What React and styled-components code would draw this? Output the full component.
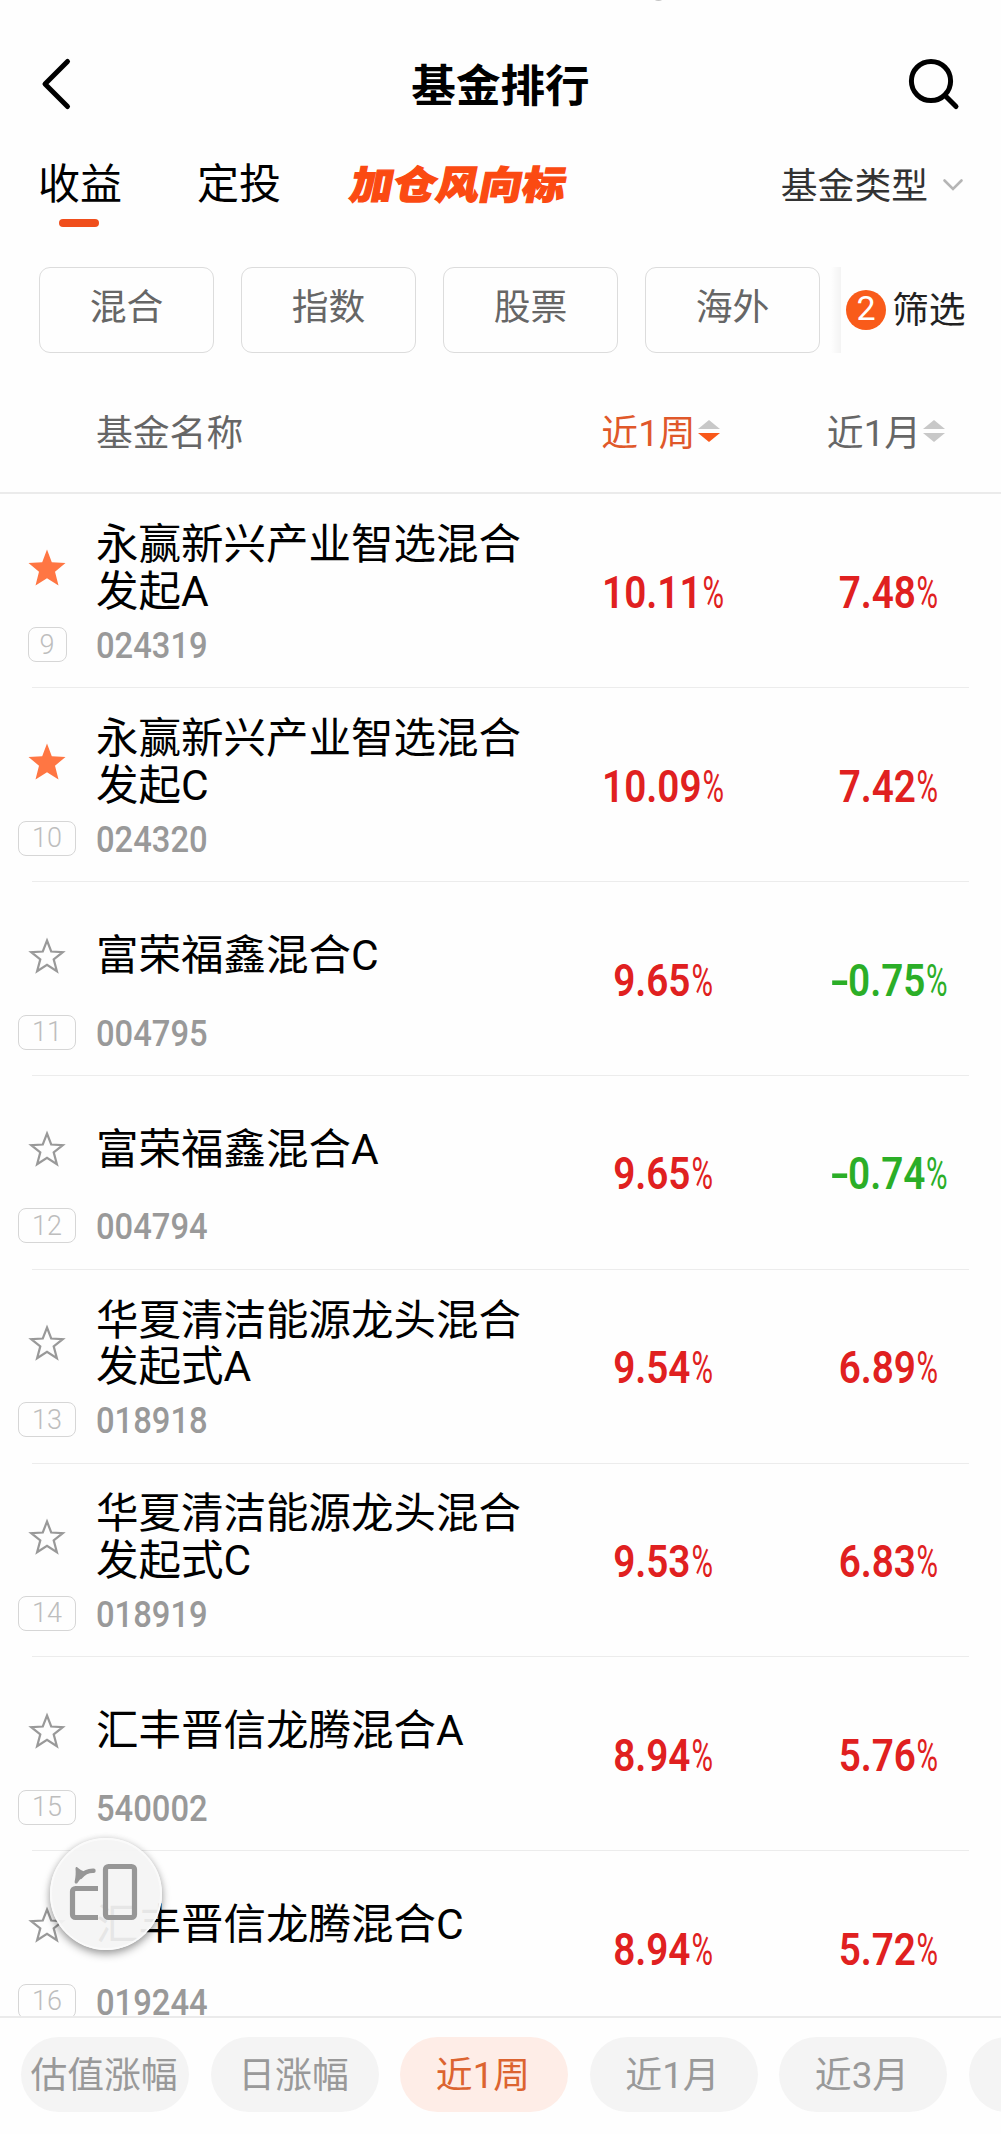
import React, { useState } from 'react';
import styled, { createGlobalStyle, css } from 'styled-components';

const GlobalStyle = createGlobalStyle`
  * { box-sizing: border-box; }
  body {
    margin: 0;
    background: #fefefe;
    font-family: Roboto, "Noto Sans CJK SC", sans-serif;
    color: #000;
  }
  button {
    border: 0;
    padding: 0;
    background: none;
    font: inherit;
    color: inherit;
  }
`;

const Page = styled.div`
  position: relative;
  display: flex;
  flex-direction: column;
  width: 1001px;
  height: 2134px;
  overflow: hidden;
  background: #fefefe;
`;

const CameraDot = styled.div`
  position: absolute;
  top: -7px;
  left: 653px;
  width: 11px;
  height: 8px;
  border-radius: 50%;
  background: #c4c4c4;
`;

/* header */
const Header = styled.header`
  display: flex;
  justify-content: space-between;
  align-items: center;
  height: 132px;
  padding: 36px 38px 0 38px;
`;

const Title = styled.h1`
  margin: 6px 0 0;
  font-size: 44.6px;
  line-height: 60px;
  font-weight: 700;
`;

const IconButton = styled.button`
  display: flex;
  width: 56px;
  height: 56px;
`;

/* tabs */
const TabBar = styled.nav`
  display: flex;
  height: 126px;
  padding: 21px 37px 0 38px;
`;

const Tab = styled.button`
  display: flex;
  flex-direction: column;
  align-items: flex-start;
  width: 159px;
  font-size: 42px;
  line-height: 64px;

  &::after {
    content: '';
    width: 40px;
    height: 8px;
    margin: 2px 0 0 21px;
    border-radius: 4px;
    background: ${({ $active }) => ($active ? '#f04e1c' : 'transparent')};
  }
`;

const PromoTab = styled.button`
  height: 64px;
  margin-left: -5px;
  font-size: 43px;
  line-height: 66px;
  font-weight: 900;
  color: #fb4a12;
  -webkit-text-stroke: 1.4px #fb4a12;
  transform: skewX(-11deg) scaleY(0.9);
`;

const TypeSelect = styled.button`
  display: flex;
  align-items: center;
  gap: 14px;
  height: 59px;
  margin-left: auto;
  font-size: 36.8px;
  color: #333;

  svg { margin-top: 4px; }
`;

/* filter chips */
const FilterBar = styled.div`
  display: flex;
  height: 114px;
  padding-top: 9px;
  padding-left: 39px;
`;

const Chip = styled.button`
  width: 175px;
  height: 86px;
  margin-right: 27px;
  padding-bottom: 12px;
  border: 1.6px solid #dcdcdc;
  border-radius: 11px;
  font-size: 36.8px;
  color: #666;
`;

const FilterEdge = styled.span`
  width: 10px;
  height: 86px;
  margin-left: -16px;
  background: linear-gradient(to right, rgba(0, 0, 0, 0), rgba(0, 0, 0, 0.045));
`;

const FilterButton = styled.button`
  display: flex;
  align-items: center;
  height: 85px;
  margin-left: 5px;
  padding-bottom: 5px;
  font-size: 36.8px;
  color: #222;
`;

const CountBadge = styled.span`
  display: flex;
  align-items: center;
  justify-content: center;
  width: 40px;
  height: 40px;
  margin: 5px 6px 0 0;
  border-radius: 50%;
  background: #f95b1a;
  font-size: 34px;
  line-height: 36px;
  padding-bottom: 4px;
  color: #fff;
`;

/* table */
const columns = css`
  display: grid;
  grid-template-columns: 96px 454px 226px 225px;
`;

const TableHead = styled.div`
  ${columns}
  align-items: center;
  height: 122px;
  padding-bottom: 4px;
  border-bottom: 2px solid #ebebeb;
  font-size: 36.8px;
  color: #666;
`;

const HeadName = styled.span`
  grid-column: 2;
`;

const SortHead = styled.button`
  display: flex;
  align-items: center;
  justify-content: center;
  gap: 2px;
  padding-right: 5px;
  color: ${({ $active }) => ($active ? '#e0582a' : '#666')};

  svg { margin-top: 2px; }
`;

const List = styled.main`
  flex: 1;
  min-height: 0;
  padding-top: 1px;
  overflow: hidden;
`;

const Row = styled.div`
  ${columns}
  height: 193.8px;
  background: linear-gradient(#ececec, #ececec) 32px 100% / 937px 1.4px no-repeat;
`;

const MarkCell = styled.div`
  display: flex;
  flex-direction: column;
  align-items: center;
  padding: 54px 2px 0 0;
`;

const Rank = styled.span`
  display: flex;
  align-items: center;
  justify-content: center;
  width: ${({ $wide }) => ($wide ? 58 : 39)}px;
  height: 35px;
  margin-top: 40px;
  border: 1.6px solid #d6d6d6;
  border-radius: 8px;
  font-size: 27px;
  font-weight: 300;
  line-height: 30px;
  color: #bdbdbd;
`;

const InfoCell = styled.div`
  display: flex;
  flex-direction: column;
`;

const NameBox = styled.div`
  display: flex;
  align-items: center;
  width: 432px;
  height: 96px;
  margin-top: 26px;
  font-size: 42.5px;
  line-height: 46.6px;
`;

const Code = styled.span`
  height: 24px;
  margin-top: 16px;
  font-size: 37.5px;
  font-weight: 500;
  line-height: 24px;
  color: #999;
  transform: scaleX(0.873);
  transform-origin: left center;
`;

const Rate = styled.div`
  display: flex;
  justify-content: center;
  height: 50px;
  margin-top: 73px;
  font-size: 45px;
  font-weight: 600;
  line-height: 50px;
  color: ${({ $down }) => ($down ? '#2bae27' : '#e02020')};
  transform: scaleX(0.86);
`;

const Minus = styled.span`
  width: 22px;
  transform: scaleX(1.45);
  transform-origin: left center;
`;

const Percent = styled.span`
  width: 25px;
  margin-left: 1px;
  font-weight: 400;
  transform: scaleX(0.76);
  transform-origin: left center;
`;

/* bottom bar */
const PeriodBar = styled.footer`
  display: flex;
  gap: 21.5px;
  height: 118px;
  padding: 19px 0 0 21px;
  border-top: 2px solid #ebebeb;
  background: #fefefe;
`;

const Period = styled.button`
  flex: 0 0 168px;
  height: 75px;
  border-radius: 38px;
  padding: 0 2px 6px 0;
  font-size: 36.8px;
  white-space: nowrap;
  background: ${({ $active }) => ($active ? '#feede7' : '#f4f4f4')};
  color: ${({ $active }) => ($active ? '#dc6430' : '#999')};
`;

const FloatButton = styled.button`
  position: absolute;
  left: 50px;
  top: 1838px;
  width: 112px;
  height: 112px;
  border: 2px solid #fafafa;
  border-radius: 50%;
  background: rgba(244, 244, 244, 0.94);
  box-shadow: 0 4px 9px rgba(0, 0, 0, 0.36), 0 0 6px rgba(0, 0, 0, 0.1);
`;

const BackIcon = () => (
  <svg width="56" height="56" viewBox="0 0 56 56" fill="none" stroke="#000" strokeWidth="5" strokeLinecap="round" strokeLinejoin="round">
    <path d="M29.5 5.5 7 28 29.5 50.5" />
  </svg>
);

const SearchIcon = () => (
  <svg width="56" height="56" viewBox="0 0 56 56" fill="none" stroke="#000" strokeWidth="5" strokeLinecap="round">
    <circle cx="24" cy="25" r="19.6" />
    <path d="M39 40.5 49 50.5" />
  </svg>
);

const DownIcon = () => (
  <svg width="22" height="14" viewBox="0 0 22 14" fill="none" stroke="#b5b5b5" strokeWidth="2.6" strokeLinecap="round">
    <path d="M2.5 2.5 11 11l8.500-8.500" />
  </svg>
);

const SortIcon = ({ desc }) => (
  <svg width="22" height="24" viewBox="0 0 22 24">
    <path d="M11 1 22 10H0z" fill="#c8c8c8" />
    <path d="M11 23 22 14H0z" fill={desc ? '#f9581a' : '#c8c8c8'} />
  </svg>
);

const StarIcon = ({ filled }) => (
  <svg width="38" height="38" viewBox="0 0 38 38" fill={filled ? '#ff7643' : 'none'} stroke={filled ? 'none' : '#999'} strokeWidth="2.2">
    {filled
      ? <path d="M19 .5 23.800 13.200 37.500 14 27 22.700 30.500 36.500 19 29.200 7.500 36.500 11 22.700 .5 14l13.700-.8z" />
      : <path d="M19 3.500 23.200 14.500 34.800 15.100 25.700 22.400 28.900 34.200 19 27.900 9.100 34.200 12.300 22.400 3.200 15.100l11.600-.6z" />}
  </svg>
);

const RotateIcon = () => (
  <svg width="108" height="108" viewBox="0 0 108 108" fill="none" stroke="#979797" strokeWidth="5.200">
    <rect x="53.500" y="26.500" width="29" height="51" rx="3" />
    <path d="M46 48.500H23.500a3 3 0 0 0-3 3v23a3 3 0 0 0 3 3H46" />
    <path d="M41.500 30.800c-5.500-.2-9.500 1.700-13 6" strokeWidth="4.400" strokeLinecap="round" />
    <path d="M25.500 27.500c2 1.800 4.500 3.300 8 4.500l-8.500 11.500c-1.800.4-2.600-.5-2.300-2.300 1-4 1.200-9 .8-12.500-.1-1.500 1-2 2-1.200z" fill="#979797" stroke="none" />
  </svg>
);

const chips = ['混合', '指数', '股票', '海外'];
const periods = ['估值涨幅', '日涨幅', '近1周', '近1月', '近3月', ''];

const funds = [
  { rank: 9, name: '永赢新兴产业智选混合发起A', code: '024319', week: '10.11', month: '7.48', fav: true },
  { rank: 10, name: '永赢新兴产业智选混合发起C', code: '024320', week: '10.09', month: '7.42', fav: true },
  { rank: 11, name: '富荣福鑫混合C', code: '004795', week: '9.65', month: '-0.75' },
  { rank: 12, name: '富荣福鑫混合A', code: '004794', week: '9.65', month: '-0.74' },
  { rank: 13, name: '华夏清洁能源龙头混合发起式A', code: '018918', week: '9.54', month: '6.89' },
  { rank: 14, name: '华夏清洁能源龙头混合发起式C', code: '018919', week: '9.53', month: '6.83' },
  { rank: 15, name: '汇丰晋信龙腾混合A', code: '540002', week: '8.94', month: '5.76' },
  { rank: 16, name: '汇丰晋信龙腾混合C', code: '019244', week: '8.94', month: '5.72' },
];

const RateCell = ({ value }) => {
  const down = value.startsWith('-');
  return (
    <Rate $down={down}>
      {down && <Minus>-</Minus>}
      {value.replace('-', '')}
      <Percent>%</Percent>
    </Rate>
  );
};

function App() {
  const [period, setPeriod] = useState('近1周');

  return (
    <Page>
      <GlobalStyle />
      <CameraDot />

      <Header>
        <IconButton><BackIcon /></IconButton>
        <Title>基金排行</Title>
        <IconButton><SearchIcon /></IconButton>
      </Header>

      <TabBar>
        <Tab $active>收益</Tab>
        <Tab>定投</Tab>
        <PromoTab>加仓风向标</PromoTab>
        <TypeSelect>
          基金类型
          <DownIcon />
        </TypeSelect>
      </TabBar>

      <FilterBar>
        {chips.map((chip) => <Chip key={chip}>{chip}</Chip>)}
        <FilterEdge />
        <FilterButton>
          <CountBadge>2</CountBadge>
          筛选
        </FilterButton>
      </FilterBar>

      <TableHead>
        <HeadName>基金名称</HeadName>
        <SortHead $active>近1周<SortIcon desc /></SortHead>
        <SortHead>近1月<SortIcon /></SortHead>
      </TableHead>

      <List>
        {funds.map((fund) => (
          <Row key={fund.code}>
            <MarkCell>
              <StarIcon filled={fund.fav} />
              <Rank $wide={fund.rank > 9}>{fund.rank}</Rank>
            </MarkCell>
            <InfoCell>
              <NameBox>{fund.name}</NameBox>
              <Code>{fund.code}</Code>
            </InfoCell>
            <RateCell value={fund.week} />
            <RateCell value={fund.month} />
          </Row>
        ))}
      </List>

      <PeriodBar>
        {periods.map((item) => (
          <Period key={item} $active={item === period} onClick={() => setPeriod(item)}>{item}</Period>
        ))}
      </PeriodBar>

      <FloatButton><RotateIcon /></FloatButton>
    </Page>
  );
}

export default App;
